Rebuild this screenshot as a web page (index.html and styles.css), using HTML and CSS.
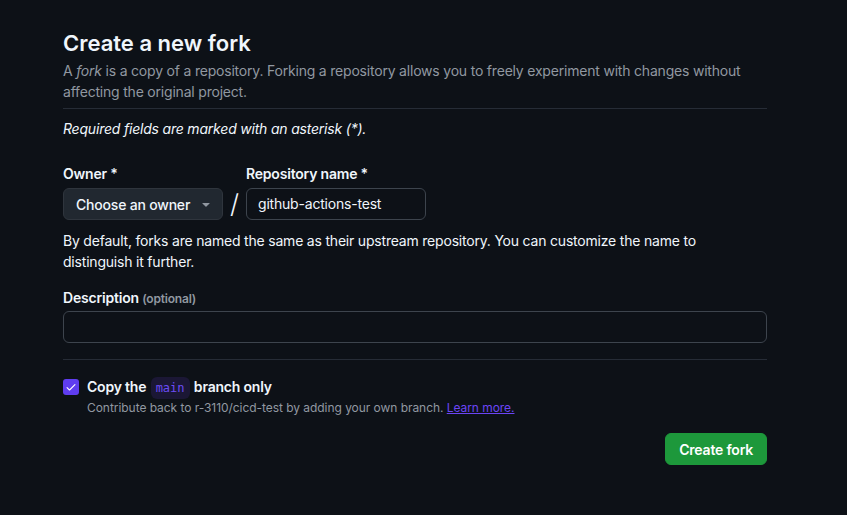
FILE: index.html
```html
<!DOCTYPE html>
<html lang="en">
<head>
<meta charset="utf-8">
<title>Create a new fork</title>
<link rel="stylesheet" href="styles.css">
</head>
<body>
<main class="page">
  <header class="head">
    <h1 class="title">Create a new fork</h1>
    <p class="lead">A <em>fork</em> is a copy of a repository. Forking a repository allows you to freely experiment with changes without affecting the original project.</p>
  </header>
  <p class="required">Required fields are marked with an asterisk (*).</p>

  <div class="name-row">
    <div class="field">
      <label class="label">Owner *</label>
      <button class="select" type="button"><span class="select-text">Choose an owner</span>
        <svg class="caret" width="16" height="16" viewBox="0 0 16 16"><path d="M4.427 7.427l3.396 3.396a.25.25 0 00.354 0l3.396-3.396A.25.25 0 0011.396 7H4.604a.25.25 0 00-.177.427z" fill="currentColor"/></svg>
      </button>
    </div>
    <span class="slash">/</span>
    <div class="field">
      <label class="label">Repository name *</label>
      <div class="input repo">github-actions-test</div>
    </div>
  </div>
  <p class="hint">By default, forks are named the same as their upstream repository. You can customize the name to distinguish it further.</p>

  <div class="field desc-field">
    <label class="label">Description <span class="optional">(optional)</span></label>
    <div class="input wide"></div>
  </div>

  <div class="copy">
    <span class="checkbox">
      <svg width="12" height="12" viewBox="0 0 16 16"><path d="M13.78 4.22a.75.75 0 010 1.060l-7.25 7.25a.75.75 0 01-1.06 0L2.22 9.28a.75.75 0 011.06-1.06L6 10.94l6.72-6.72a.75.75 0 011.06 0z" fill="#fff"/></svg>
    </span>
    <div class="copy-text">
      <div class="copy-title">Copy the <code class="branch">main</code> branch only</div>
      <div class="copy-note">Contribute back to r-3110/cicd-test by adding your own branch. <a href="#" class="link">Learn more.</a></div>
    </div>
  </div>

  <div class="actions">
    <button class="primary" type="button">Create fork</button>
  </div>
</main>
</body>
</html>
```

FILE: styles.css
```css
* { box-sizing: border-box; }
html, body { margin: 0; padding: 0; background: #0d1117; }
body {
  font-family: Inter, "Noto Sans", "Liberation Sans", sans-serif;
  color: #f0f6fc;
  font-size: 14px;
  line-height: 21px;
  letter-spacing: -0.2px;
}
.page {
  width: 704px;
  margin-left: 63px;
  padding-top: 28px;
}
.head {
  border-bottom: 1px solid #262c36;
  padding-bottom: 6px;
}
.title {
  margin: 0;
  font-size: 22px;
  line-height: 30px;
  font-weight: 600;
  letter-spacing: 0;
}
.lead {
  margin: 2px 0 0;
  color: #9198a1;
  font-size: 14px;
  line-height: 21px;
}
.required {
  margin: 9px 0 0;
  font-style: italic;
  font-size: 14px;
}
.name-row {
  display: flex;
  align-items: flex-end;
  margin-top: 24px;
}
.field { display: flex; flex-direction: column; }
.label {
  font-weight: 600;
  font-size: 14px;
  line-height: 21px;
  margin-bottom: 4px;
}
.select {
  display: flex;
  align-items: center;
  gap: 6px;
  height: 32px;
  width: 160px;
  padding: 0 8px 0 12px;
  background: #212830;
  border: 1px solid #2f353d;
  border-radius: 6px;
  color: #f0f6fc;
  font: 500 14px Inter, "Noto Sans", sans-serif;
  letter-spacing: -0.2px;
  white-space: nowrap;
}
.select-text { white-space: nowrap; }
.caret { color: #9198a1; margin-left: auto; flex: none; }
.slash {
  width: 23px;
  text-align: center;
  font-size: 26px;
  line-height: 32px;
  height: 32px;
  color: #f0f6fc;
  font-weight: 300;
}
.input {
  height: 32px;
  border: 1px solid #3d444d;
  border-radius: 6px;
  background: #0d1117;
  padding: 0 11px;
  line-height: 30px;
  font-size: 14px;
}
.repo { width: 180px; }
.wide { width: 704px; }
.hint {
  margin: 10px 0 0;
  font-size: 14px;
  line-height: 21px;
}
.desc-field { margin-top: 15px; }
.desc-field .label { margin-bottom: 2px; }
.optional { color: #9198a1; font-size: 12px; font-weight: 600; }
.copy {
  display: flex;
  gap: 8px;
  margin-top: 16px;
  padding-top: 16px;
  border-top: 1px solid #262c36;
}
.checkbox {
  flex: none;
  width: 16px;
  height: 16px;
  margin-top: 3px;
  border-radius: 3px;
  background: #5f3df0;
  display: flex;
  align-items: center;
  justify-content: center;
}
.copy-title {
  font-weight: 600;
  font-size: 14px;
  line-height: 22px;
}
.branch {
  display: inline-block;
  font-family: "DejaVu Sans Mono", "Liberation Mono", monospace;
  font-size: 12px;
  line-height: 18px;
  font-weight: 400;
  letter-spacing: 0;
  color: #6c4cf5;
  background: #1b1735;
  border-radius: 6px;
  padding: 2px 5px;
  margin: 0 1px;
  vertical-align: middle;
}
.copy-note {
  color: #9198a1;
  font-size: 12px;
  line-height: 18px;
  letter-spacing: -0.05px;
}
.link { color: #6b45f5; text-decoration: underline; }
.actions {
  display: flex;
  justify-content: flex-end;
  margin-top: 16px;
}
.primary {
  height: 32px;
  padding: 0 13px;
  background: #1d983b;
  border: 1px solid #1d983b;
  border-radius: 6px;
  color: #fff;
  font: 600 14px Inter, "Noto Sans", sans-serif;
  letter-spacing: -0.2px;
}
```
